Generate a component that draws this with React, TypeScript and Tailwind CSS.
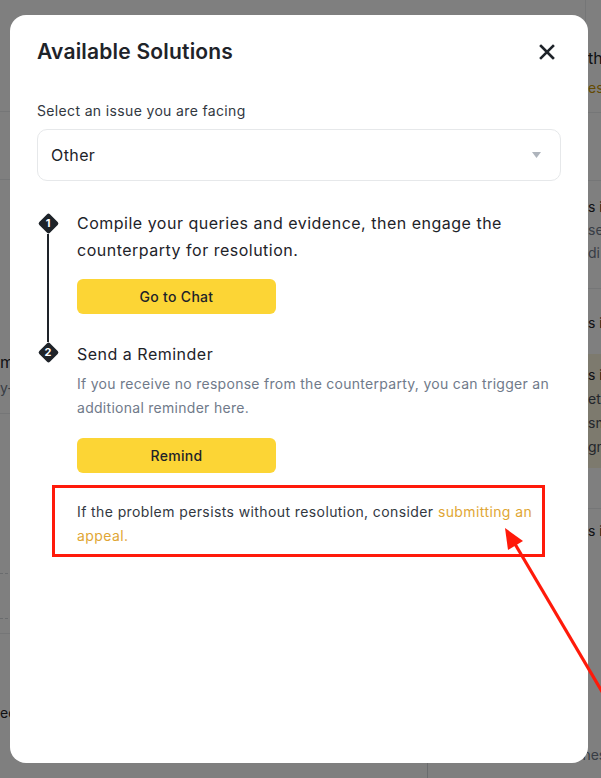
import React from 'react';

function Diamond({ n }: { n: number }) {
  return (
    <div className="grid h-[21px] w-[21px] place-items-center">
      <div className="col-start-1 row-start-1 h-[15px] w-[15px] rotate-45 rounded-[2px] bg-[#1e2329]" />
      <span className="relative col-start-1 row-start-1 text-[11px] font-bold leading-none text-white">{n}</span>
    </div>
  );
}

function BackgroundPage() {
  return (
    <div className="flex h-full flex-col">
      <div className="flex h-[748px]">
        {/* left column, mostly behind the dialog */}
        <div className="w-[586px] border-r border-[#eaecef]">
          <div className="h-[112px] border-b border-[#eaecef]" />
          <div className="h-[68px] border-b border-[#eaecef]" />
          <div className="h-[170px]" />
          <div className="text-[16px] leading-[24px] text-[#1e2329]">mmmm Method</div>
          <div className="mt-[4px] text-[14px] leading-[20px] text-[#707a8a]">y-transfer</div>
          <div className="mt-[15px] h-[160px] border-t border-[#eaecef]" />
          <div className="h-[45px] border-t border-dashed border-[#d5d8dc]" />
          <div className="h-[15px] border-t border-dashed border-[#d5d8dc]" />
          <div className="h-[70px] border-t border-[#eaecef]" />
          <div className="text-[14px] leading-[20px] text-[#1e2329]">ed</div>
        </div>
        {/* right column */}
        <div className="flex-1 overflow-hidden whitespace-nowrap pl-[2px]">
          <div className="pt-[46px] text-[16px] leading-[24px] text-[#1e2329]">than 5 minutes</div>
          <div className="mt-[8px] text-[14px] leading-[20px] text-[#c99400]">es</div>
          <div className="mt-[14px] h-[68px] border-t border-[#eaecef]" />
          <div className="border-t border-[#eaecef] pt-[14px] text-[14px] leading-[23px] text-[#1e2329]">
            <div>s is</div>
            <div className="text-[#707a8a]">se</div>
            <div className="text-[#707a8a]">di</div>
          </div>
          <div className="mt-[24px] border-t border-[#eaecef] pt-[22px] text-[14px] leading-[23px] text-[#1e2329]">
            s is
          </div>
          <div className="mt-[20px] bg-[#fbf4dc] py-[9px] text-[14px] leading-[24px] text-[#1e2329]">
            <div>s is</div>
            <div className="text-[#474d57]">et,</div>
            <div className="text-[#474d57]">sm</div>
            <div className="text-[#474d57]">gn</div>
          </div>
          <div className="mt-[40px] border-t border-[#eaecef] pt-[10px] text-[14px] leading-[23px] text-[#1e2329]">
            s is
          </div>
        </div>
      </div>
      <div className="flex flex-1">
        <div className="w-[428px] border-r border-[#d5d8dc]" />
        <div className="flex-1 overflow-hidden whitespace-nowrap pl-[146px] text-[14px] leading-[14px] text-[#707a8a]">
          ones
        </div>
      </div>
    </div>
  );
}

export default function App() {
  return (
    <div className="relative h-[778px] w-[601px] overflow-hidden bg-white font-[Inter,'Noto_Sans',sans-serif]">
      <BackgroundPage />
      <div className="absolute inset-0 bg-black/50" />

      {/* dialog */}
      <div className="absolute left-[10px] top-[15px] h-[748px] w-[578px] rounded-[16px] bg-white px-[27px] pt-[23px]">
        <div className="flex items-center justify-between">
          <h1 className="text-[21px] font-semibold leading-[28px] tracking-[0.2px] text-[#1e2329]">Available Solutions</h1>
          <svg width="16" height="16" viewBox="0 0 16 16" className="mr-[6px]" fill="none">
            <path d="M2 2L14 14M14 2L2 14" stroke="#1e2329" strokeWidth="2.6" strokeLinecap="square" />
          </svg>
        </div>

        <div className="mt-[35px] text-[14px] leading-[20px] tracking-[0.35px] text-[#32383f]">Select an issue you are facing</div>
        <div className="mt-[8px] flex h-[52px] items-center justify-between rounded-[10px] border border-[#e6e8ea] pl-[13px] pr-[19px]">
          <span className="text-[16px] tracking-[0.4px] text-[#1e2329]">Other</span>
          <svg width="9" height="6" viewBox="0 0 9 6">
            <path d="M0 0H9L4.5 6Z" fill="#aeb4bc" />
          </svg>
        </div>

        {/* steps */}
        <div className="mt-[29px]">
          <div className="flex">
            <div className="flex w-[22px] flex-col items-center pt-[3px]">
              <Diamond n={1} />
              <div className="w-[2px] flex-1 bg-[#1e2329]" />
            </div>
            <div className="ml-[18px] flex-1 pb-[28px]">
              <p className="whitespace-nowrap text-[16px] leading-[27px] tracking-[0.5px] text-[#1e2329]">
                Compile your queries and evidence, then engage the
                <br />
                counterparty for resolution.
              </p>
              <button className="mt-[15px] h-[35px] w-[199px] rounded-[6px] bg-[#fcd535] text-[14px] font-medium tracking-[0.3px] text-[#1e2329]">
                Go to Chat
              </button>
            </div>
          </div>

          <div className="flex">
            <div className="flex w-[22px] flex-col items-center">
              <Diamond n={2} />
            </div>
            <div className="ml-[18px] flex-1">
              <p className="text-[16px] leading-[24px] tracking-[0.5px] text-[#1e2329]">Send a Reminder</p>
              <p className="mt-[6px] whitespace-nowrap text-[14px] leading-[24px] tracking-[0.28px] text-[#707a8a]">
                If you receive no response from the counterparty, you can trigger an
                <br />
                additional reminder here.
              </p>
              <button className="mt-[18px] h-[35px] w-[199px] rounded-[6px] bg-[#fcd535] text-[14px] font-medium tracking-[0.3px] text-[#1e2329]">
                Remind
              </button>
            </div>
          </div>
        </div>

        <div className="ml-[15px] mt-[12px] w-[493px] border-[3px] border-[#ff1a0a] pb-[6px] pl-[22px] pt-[12px]">
          <p className="whitespace-nowrap text-[14px] leading-[24px] tracking-[0.4px] text-[#32383f]">
            If the problem persists without resolution, consider{' '}
            <span className="text-[#dfa634]">submitting an</span>
            <br />
            <span className="text-[#dfa634]">appeal.</span>
          </p>
        </div>
      </div>

      {/* annotation arrow */}
      <svg className="pointer-events-none absolute inset-0" width="601" height="778" viewBox="0 0 601 778">
        <line x1="604" y1="695" x2="515" y2="544" stroke="#ff1a0a" strokeWidth="3.2" />
        <polygon points="505,528 523,541 508,550" fill="#ff1a0a" />
      </svg>
    </div>
  );
}
